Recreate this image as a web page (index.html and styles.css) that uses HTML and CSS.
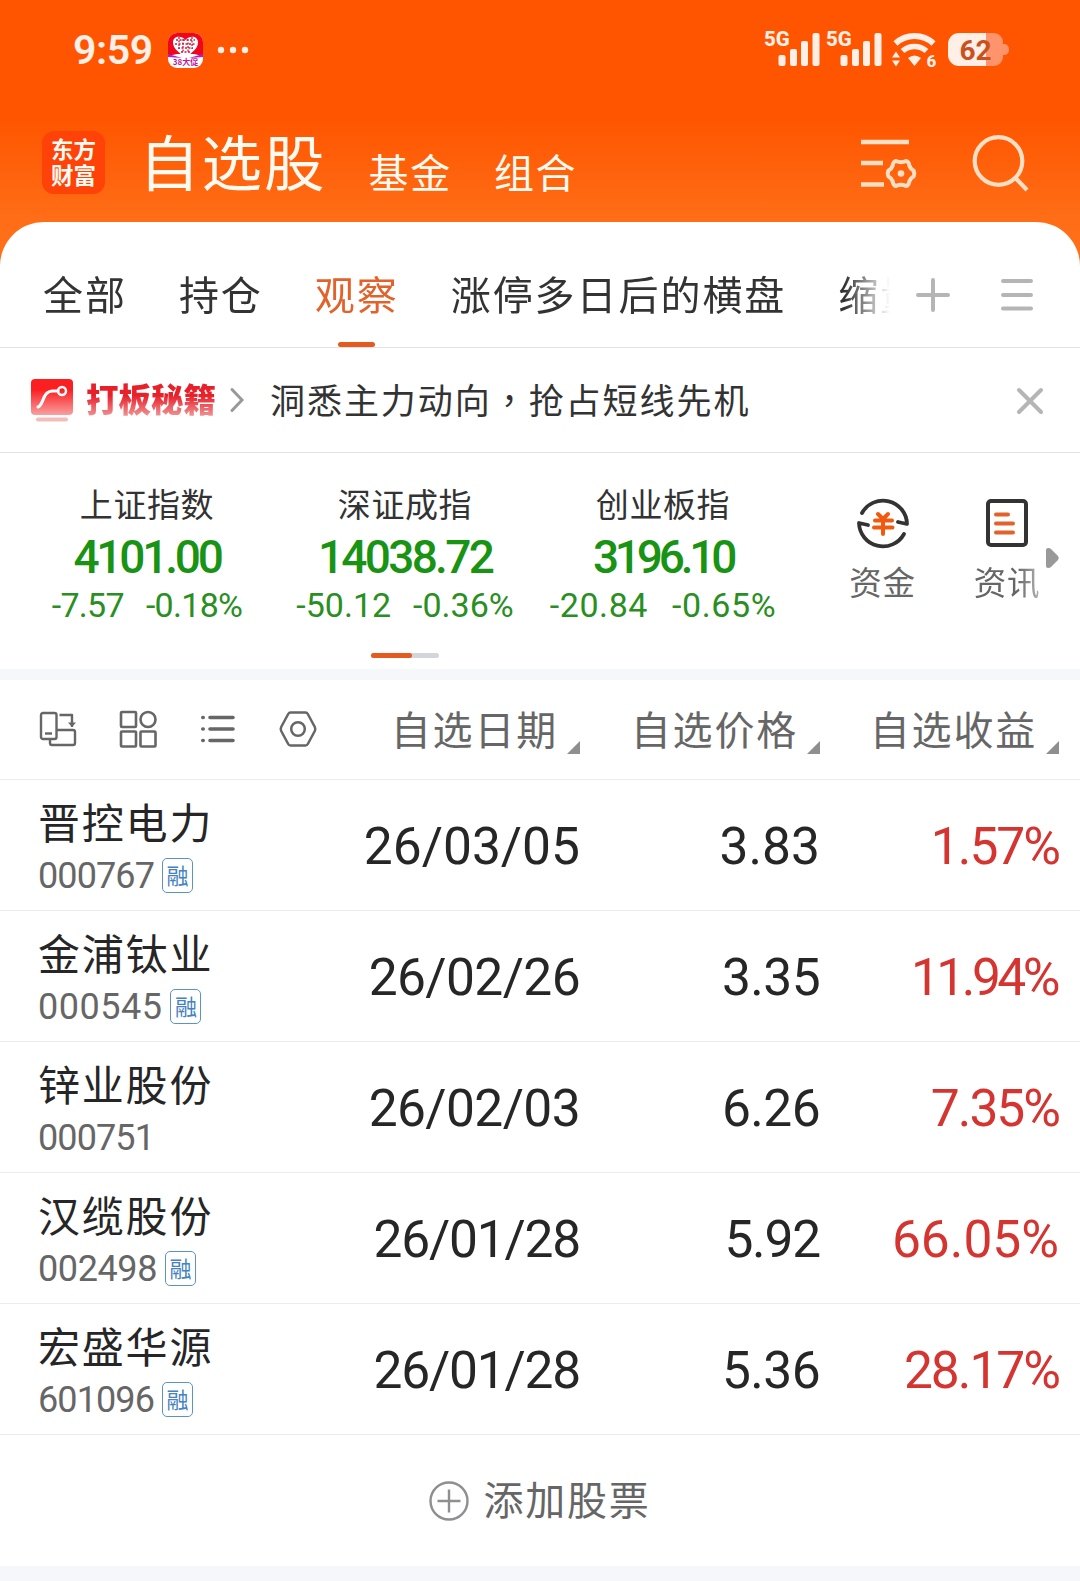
FILE: index.html
```html
<!DOCTYPE html>
<html lang="zh-CN">
<head>
    <meta charset="UTF-8">
    <title>自选股</title>
    <link rel="stylesheet" href="styles.css">
</head>
<body>
    <header class="top">
        <div class="status-bar">
            <span class="clock">9:59</span>
            <svg class="app-badge" width="35" height="35" viewBox="0 0 35 35">
                <rect width="35" height="35" rx="9" fill="#fff"/>
                <path d="M0 23V9a9 9 0 0 1 9-9h17a9 9 0 0 1 9 9v14l-9-2H9z" fill="#f0061c"/>
                <path d="M0 21l14 4-14-1zM35 21l-14 4 14-1z" fill="#b01fc4"/>
                <path d="M17.500 25C12 20 5 16 5 9.500 5 3 13 2 17.500 7 22 2 30 3 30 9.500 30 16 23 20 17.500 25z" fill="#fff"/>
                <path d="M8 7h19M7 11h21M10 15h15M13 19h9M11 4v12M15 6v14M20 6v14M24 4v12" stroke="#c81a3c" stroke-width="1.300" stroke-dasharray="2 1.500" fill="none"/>
                <text x="17.500" y="32" text-anchor="middle" class="badge-text">38大促</text>
            </svg>
            <svg class="more-dots" width="32" height="8" viewBox="0 0 32 8" fill="#ffefe6">
                <circle cx="4" cy="4" r="3.200"/><circle cx="16" cy="4" r="3.200"/><circle cx="28" cy="4" r="3.200"/>
            </svg>
            <div class="status-right">
                <svg width="56" height="38" viewBox="0 0 56 38" fill="#ffefe6">
                    <text x="0" y="16.500" class="net-text">5G</text>
                    <rect x="14.500" y="26" width="7" height="11" rx="2"/><rect x="26" y="20" width="7" height="17" rx="2"/>
                    <rect x="37" y="12" width="7" height="25" rx="2"/><rect x="48.500" y="4" width="7" height="33" rx="2"/>
                </svg>
                <svg width="56" height="38" viewBox="0 0 56 38" fill="#ffefe6">
                    <text x="0" y="16.500" class="net-text">5G</text>
                    <rect x="14.500" y="26" width="7" height="11" rx="2"/><rect x="26" y="20" width="7" height="17" rx="2"/>
                    <rect x="37" y="12" width="7" height="25" rx="2"/><rect x="48.500" y="4" width="7" height="33" rx="2"/>
                </svg>
                <svg width="45" height="38" viewBox="0 0 45 38">
                    <path d="M3.500 14.500a28 28 0 0 1 38 0" fill="none" stroke="#ffefe6" stroke-width="6"/>
                    <path d="M10.500 22a18 18 0 0 1 24 0" fill="none" stroke="#ffefe6" stroke-width="5.500"/>
                    <path d="M16 29q6.500-5 13 0l-6.500 8zM0 28.500l4-6 4 6zM0 31.500h8l-4 6z" fill="#ffefe6"/>
                    <text x="34.500" y="37.500" class="wifi-text">6</text>
                </svg>
                <svg width="61" height="38" viewBox="0 0 61 38">
                    <path d="M38 4h8a9 9 0 0 1 9 9v2h2q4 1 4 5.500t-4 5.500h-2v2a9 9 0 0 1-9 9h-8z" fill="#ff946c"/>
                    <path d="M38 4v33H11a11 11 0 0 1-11-11V15A11 11 0 0 1 11 4z" fill="#ffefe6"/>
                    <text x="27.500" y="30.500" text-anchor="middle" class="battery-text">62</text>
                </svg>
            </div>
        </div>

        <div class="nav">
            <div class="logo"><span>东方</span><span>财富</span></div>
            <div class="nav-title">自选股</div>
            <div class="nav-item">基金</div>
            <div class="nav-item">组合</div>
            <svg class="nav-filter" width="58" height="56" viewBox="0 0 58 56" fill="none" stroke="#ffdfc4" stroke-width="4.500">
                <path d="M0 7h48M0 28h22M0 49.500h23"/>
                <path stroke-width="4" stroke-linejoin="round" d="M35 26q5 2.500 10 0 2.500 0 3.500 5 1 3 4 4.500 1.500 3 0 6-3 1.500-4 4.500-1 5-3.500 5-5-2.500-10 0-2.500 0-3.500-5-1-3-4-4.500-1.500-3 0-6 3-1.500 4-4.500 1-5 3.500-5z"/>
                <circle cx="40" cy="38.500" r="3.300" fill="#ffdfc4" stroke="none"/>
            </svg>
            <svg width="58" height="58" viewBox="0 0 58 58" fill="none" stroke="#ffdfc4" stroke-width="4.200">
                <circle cx="26.500" cy="27" r="23.800"/><path d="M42.500 43L55 56"/>
            </svg>
        </div>
    </header>

    <main class="sheet">
        <div class="tabs">
            <div class="tab-list">
                <span>全部</span>
                <span>持仓</span>
                <span class="active">观察</span>
                <span>涨停多日后的横盘</span>
                <span>缩量</span>
            </div>
            <svg width="36" height="36" viewBox="0 0 36 36" stroke="#b5b5b5" stroke-width="4" stroke-linecap="round">
                <path d="M3 18h30M18 3v30"/>
            </svg>
            <svg class="menu-icon" width="32" height="32" viewBox="0 0 32 32" stroke="#b5b5b5" stroke-width="4" stroke-linecap="round">
                <path d="M2 2h28M2 16h28M2 29.500h28"/>
            </svg>
        </div>

        <div class="promo">
            <svg width="43" height="44" viewBox="0 0 43 44">
                <defs>
                    <linearGradient id="promoFill" x1="0" y1="0" x2="0" y2="1">
                        <stop offset="0.300" stop-color="#fb1f22"/><stop offset="1" stop-color="#f7a0a0"/>
                    </linearGradient>
                </defs>
                <rect y="1" width="42" height="36" rx="4" fill="url(#promoFill)"/>
                <rect x="5" y="39.500" width="32" height="4" rx="2" fill="#f5bcbc"/>
                <path d="M7 29c6-2 4-16 15-16h5" fill="none" stroke="#fff" stroke-width="3" stroke-linecap="round"/>
                <circle cx="31" cy="13" r="4" fill="none" stroke="#fff" stroke-width="2.500"/>
            </svg>
            <span class="promo-name">打板秘籍</span>
            <svg class="promo-arrow" width="14" height="26" viewBox="0 0 14 26" fill="none" stroke="#999" stroke-width="3" stroke-linecap="round">
                <path d="M2 2.500L12 13 2 23.500"/>
            </svg>
            <span class="promo-text">洞悉主力动向<span lang="zh-TW" class="comma">，</span>抢占短线先机</span>
            <svg class="promo-close" width="28" height="28" viewBox="0 0 28 28" stroke="#b5b5b5" stroke-width="4" stroke-linecap="round">
                <path d="M3 3l22 22M25 3L3 25"/>
            </svg>
        </div>

        <section class="market">
            <div class="index">
                <div class="index-name">上证指数</div>
                <div class="index-value tight">4101.00</div>
                <div class="index-change tight"><span>-7.57</span><span>-0.18%</span></div>
            </div>
            <div class="index">
                <div class="index-name">深证成指</div>
                <div class="index-value">14038.72</div>
                <div class="index-change"><span>-50.12</span><span>-0.36%</span></div>
            </div>
            <div class="index">
                <div class="index-name">创业板指</div>
                <div class="index-value tighter">3196.10</div>
                <div class="index-change wide"><span>-20.84</span><span>-0.65%</span></div>
            </div>
            <div class="shortcut">
                <svg width="54" height="54" viewBox="0 0 54 54" fill="none" stroke="#333" stroke-width="3.800" stroke-linecap="round" stroke-linejoin="round">
                    <path d="M6 17A24 24 0 0 1 51 28l-9-2"/>
                    <path d="M48 38A24 24 0 0 1 3 27l9 2"/>
                    <path d="M22 18l5 5 5-5M19 24.500h17M18 31.500h18.500M27 24v14" stroke="#f1590f" stroke-width="4"/>
                </svg>
                <span>资金</span>
            </div>
            <div class="shortcut news">
                <svg width="54" height="54" viewBox="0 0 54 54" fill="none" stroke="#333" stroke-width="4" stroke-linecap="round">
                    <rect x="8" y="5" width="38" height="44" rx="3"/>
                    <path d="M16 18.500h12M16 27.500h17M16 36.500h17" stroke="#e2622b" stroke-width="4"/>
                </svg>
                <span>资讯</span>
            </div>
            <svg class="next" width="13" height="20" viewBox="0 0 13 20" fill="#999">
                <path d="M0 2q0-2 2-2 2 0 3 1l7 7q1.500 2 0 4l-7 7q-1 1-3 1-2 0-2-2z"/>
            </svg>
        </section>
        <div class="pager"><i></i></div>

        <section class="stocks">
            <div class="row head">
                <div class="tools">
                    <svg width="38" height="38" viewBox="0 0 38 38" fill="none" stroke="#666" stroke-width="2.400" stroke-linejoin="round">
                        <rect x="2" y="3" width="15.500" height="26" rx="2"/><path d="M6 23.500h7"/>
                        <path d="M20.500 5H33v12M11 29v4q0 2 2 2h21q2 0 2-2V22q0-2-2-2H18"/>
                        <path d="M29 12.500h8L33 17z" fill="#666" stroke="none"/>
                    </svg>
                    <svg width="38" height="38" viewBox="0 0 38 38" fill="none" stroke="#666" stroke-width="2.600">
                        <rect x="2" y="2" width="15" height="15" rx="1"/><circle cx="29" cy="9.500" r="7.500"/>
                        <rect x="2" y="21.500" width="15" height="15" rx="1"/><rect x="21.500" y="21.500" width="15" height="15" rx="1"/>
                    </svg>
                    <svg width="38" height="38" viewBox="0 0 38 38" fill="none" stroke="#666" stroke-width="3.600" stroke-linecap="round">
                        <path d="M11 7.500h23M11 19h23M11 30.500h23M3.800 7.500h.4M3.800 19h.4M3.800 30.500h.4"/>
                    </svg>
                    <svg width="38" height="38" viewBox="0 0 38 38" fill="none" stroke="#666" stroke-width="2.500" stroke-linejoin="round">
                        <path d="M11.500 2.500h15q1.500 0 2.300 1.500l7 13q1 2 0 4l-7 13q-.8 1.500-2.300 1.500h-15q-1.500 0-2.300-1.500l-7-13q-1-2 0-4l7-13q.8-1.500 2.300-1.500z"/>
                        <circle cx="19" cy="19" r="6.800"/>
                    </svg>
                </div>
                <div class="col"><span>自选日期</span><i class="sort"></i></div>
                <div class="col"><span>自选价格</span><i class="sort"></i></div>
                <div class="col"><span>自选收益</span><i class="sort"></i></div>
            </div>
            <div class="row">
                <div class="stock">
                    <div class="name">晋控电力</div>
                    <div class="code"><span class="tight">000767</span><b>融</b></div>
                </div>
                <div class="num">26/03/05</div>
                <div class="num">3.83</div>
                <div class="num up narrow">1.57%</div>
            </div>
            <div class="row">
                <div class="stock">
                    <div class="name">金浦钛业</div>
                    <div class="code"><span class="loose">000545</span><b>融</b></div>
                </div>
                <div class="num snug">26/02/26</div>
                <div class="num snug">3.35</div>
                <div class="num up narrower">11.94%</div>
            </div>
            <div class="row">
                <div class="stock">
                    <div class="name">锌业股份</div>
                    <div class="code"><span class="tight">000751</span></div>
                </div>
                <div class="num snug">26/02/03</div>
                <div class="num snug">6.26</div>
                <div class="num up narrow">7.35%</div>
            </div>
            <div class="row">
                <div class="stock">
                    <div class="name">汉缆股份</div>
                    <div class="code"><span class="snug">002498</span><b>融</b></div>
                </div>
                <div class="num close">26/01/28</div>
                <div class="num close">5.92</div>
                <div class="num up">66.05%</div>
            </div>
            <div class="row">
                <div class="stock">
                    <div class="name">宏盛华源</div>
                    <div class="code"><span class="tight">601096</span><b>融</b></div>
                </div>
                <div class="num close">26/01/28</div>
                <div class="num snug">5.36</div>
                <div class="num up narrow">28.17%</div>
            </div>
        </section>

        <div class="add">
            <svg width="40" height="40" viewBox="0 0 40 40" fill="none" stroke="#8e8e93" stroke-width="2.400">
                <circle cx="20" cy="20" r="18.500"/><path d="M8.500 20h23M20 8.500v23"/>
            </svg>
            <span>添加股票</span>
        </div>
    </main>
</body>
</html>
```

FILE: styles.css
```css
* {
    box-sizing: border-box;
}
body {
    margin: 0;
    width: 1080px;
    height: 1581px;
    overflow: hidden;
    background: #f6f7fa;
    font-family: "Noto Sans CJK SC", sans-serif;
    color: #333;
}
svg {
    display: block;
    flex: none;
    overflow: visible;
}
.top {
    height: 270px;
    background: linear-gradient(#ff5500 118px, #ff6e17 222px, #ff701a);
    color: #fffaf0;
}

/* status bar */
.status-bar {
    display: flex;
    align-items: center;
    height: 100px;
    padding: 0 71px 0 73px;
}
.clock {
    width: 95px;
    font: 600 41px/50px Roboto, sans-serif;
    letter-spacing: -0.4px;
    color: #ffefe6;
}
.badge-text {
    font: 700 8px "Noto Sans CJK SC", sans-serif;
    fill: #c4189a;
}
.more-dots {
    margin-left: 14px;
}
.status-right {
    display: flex;
    gap: 6px;
    margin-left: auto;
    margin-top: -4px;
}
.status-right svg:nth-child(3) {
    margin-left: 4px;
}
.status-right svg:nth-child(4) {
    margin-left: 5px;
}
.net-text {
    font: 800 20.5px Roboto, sans-serif;
}
.wifi-text {
    font: 800 17px Roboto, sans-serif;
    fill: #ffefe6;
}
.battery-text {
    font: 700 28px Roboto, sans-serif;
    fill: #c9501f;
}

/* app navigation */
.nav {
    display: flex;
    height: 122px;
    padding: 0 50px 0 42px;
}
.logo {
    display: flex;
    flex-direction: column;
    align-items: center;
    width: 63px;
    height: 63px;
    margin-top: 31px;
    padding-top: 4px;
    border-radius: 12px;
    background: #ff4208;
    font-size: 22.5px;
    font-weight: 700;
    line-height: 26px;
}
.nav-title {
    margin: 20px 0 0 34px;
    font-size: 60.5px;
    line-height: 80px;
    letter-spacing: 2px;
}
.nav-item {
    margin: 41px 0 0 42px;
    font-size: 40px;
    line-height: 60px;
    letter-spacing: 1.7px;
}
.nav-filter {
    margin: 35px 53px 0 auto;
}
.nav-filter + svg {
    margin-top: 34px;
}

/* sheet */
.sheet {
    height: 1344px;
    margin-top: -48px;
    border-radius: 44px 44px 0 0;
    background: #fff;
}
.tabs {
    display: flex;
    height: 126px;
    padding-top: 20px;
    border-bottom: 1px solid #e3e3e3;
}
.tab-list {
    display: flex;
    width: 893px;
    margin-right: 22px;
    padding-left: 43px;
    gap: 52px;
    overflow: hidden;
    white-space: nowrap;
    font-size: 40px;
    line-height: 102px;
    letter-spacing: 1.95px;
    -webkit-mask-image: linear-gradient(to right, #000 845px, transparent 890px);
    mask-image: linear-gradient(to right, #000 845px, transparent 890px);
}
.tab-list .active {
    color: #e2622b;
    display: flex;
    flex-direction: column;
}
.tab-list .active::after {
    content: "";
    width: 37px;
    height: 5px;
    margin: -2px auto 0;
    border-radius: 3px;
    background: #e45a1f;
}
.tabs svg {
    margin-top: 35px;
}
.tabs .menu-icon {
    margin: 37px 0 0 50px;
}
.promo {
    display: flex;
    align-items: center;
    height: 105px;
    padding: 0 36px 0 31px;
    border-bottom: 1px solid #e3e3e3;
}
.promo-name {
    width: 132px;
    margin: -5px 0 0 12px;
    font-size: 32.5px;
    font-weight: 900;
    line-height: 48px;
    background: linear-gradient(#e8202a 45%, #f09a9a 90%);
    -webkit-background-clip: text;
    background-clip: text;
    color: transparent;
}
.promo-arrow {
    margin-left: 12px;
}
.promo-text {
    margin: -2px 0 0 26px;
    font-size: 35px;
    line-height: 50px;
    letter-spacing: 1.95px;
}
.comma {
    font-family: "Noto Sans CJK TC", sans-serif;
}
.promo-close {
    margin: 2px 0 0 auto;
}

/* market indices */
.market {
    display: flex;
    height: 200px;
    padding: 27px 21px 0 18px;
}
.index {
    width: 258px;
    text-align: center;
    color: #2a8f22;
}
.index-name {
    color: #333;
    font-size: 33px;
    line-height: 46px;
    letter-spacing: 0.6px;
}
.index-value {
    margin-top: 3px;
    font: 500 46px/56px Roboto, sans-serif;
    letter-spacing: -2.7px;
    color: #189313;
}
.index-value.tight {
    letter-spacing: -3.2px;
}
.index-value.tighter {
    letter-spacing: -4.2px;
}
.index-change {
    display: flex;
    justify-content: center;
    gap: 22px;
    font: 400 34px/40px Roboto, sans-serif;
}
.index-change.tight {
    letter-spacing: -0.7px;
}
.index-change.wide {
    letter-spacing: 0.6px;
    gap: 24px;
}
.shortcut {
    display: flex;
    flex-direction: column;
    align-items: center;
    width: 123px;
    margin: 16px 0 0 29px;
    color: #666;
    font-size: 32.5px;
    line-height: 46px;
    letter-spacing: 0.8px;
}
.shortcut span {
    margin-top: 8px;
}
.shortcut.news {
    width: 78px;
    margin-left: 24px;
}
.news span {
    -webkit-mask-image: linear-gradient(to right, #000 65%, rgba(0,0,0,0.500));
    mask-image: linear-gradient(to right, #000 65%, rgba(0,0,0,0.500));
}
.next {
    margin-top: 68px;
}
.pager {
    width: 68px;
    height: 5px;
    margin: 0 0 11px 371px;
    border-radius: 3px;
    background: #d3d5da;
}
.pager i {
    display: block;
    width: 41px;
    height: 5px;
    border-radius: 3px;
    background: #e45a1f;
}

/* stock table */
.stocks {
    border-top: 11px solid #f6f7fa;
}
.row {
    display: grid;
    grid-template-columns: 320px 260px 240px 239px;
    height: 131px;
    border-bottom: 1px solid #ececec;
}
.row.head {
    height: 100px;
    align-items: center;
    padding-bottom: 1px;
    color: #666;
}
.tools {
    display: flex;
    gap: 42px;
    padding-left: 39px;
}
.col {
    display: flex;
    justify-content: flex-end;
    align-items: flex-end;
    font-size: 40px;
    line-height: 58px;
    letter-spacing: 1.8px;
    white-space: nowrap;
}
.col span {
    margin-bottom: 3px;
}
.sort {
    margin: 0 0 6px 9px;
    border-left: 13px solid transparent;
    border-bottom: 13px solid #8e8e93;
}
.stock {
    padding: 11px 0 0 38px;
}
.name {
    color: #262626;
    font-size: 42px;
    line-height: 60px;
    letter-spacing: 1.8px;
}
.code {
    display: flex;
    align-items: center;
    height: 44px;
    margin-top: 2px;
    gap: 8px;
    font: 400 36px/44px Roboto, sans-serif;
    color: #666;
}
.code span {
    margin-top: 2px;
}
.code b {
    width: 31px;
    height: 35px;
    border: 1.5px solid #5d94bd;
    border-radius: 5px;
    font: 400 22px/30px "Noto Sans CJK SC", sans-serif;
    text-align: center;
    color: #4482c0;
}
.code .tight {
    letter-spacing: -0.9px;
}
.code .snug {
    letter-spacing: -0.4px;
}
.code .loose {
    letter-spacing: 0.5px;
}
.num {
    font: 400 51.5px/133px Roboto, sans-serif;
    text-align: right;
    color: #262626;
}
.num.up {
    color: #d43530;
}
.num.snug {
    letter-spacing: -0.6px;
}
.num.close {
    letter-spacing: -1.2px;
}
.num.narrow {
    letter-spacing: -2px;
}
.num.narrower {
    letter-spacing: -3.5px;
    padding-right: 2px;
}

.add {
    display: flex;
    justify-content: center;
    align-items: center;
    gap: 14px;
    height: 131px;
    color: #666;
    font-size: 40px;
    line-height: 58px;
    letter-spacing: 1.8px;
}
.add span {
    margin-top: -5px;
}
```
